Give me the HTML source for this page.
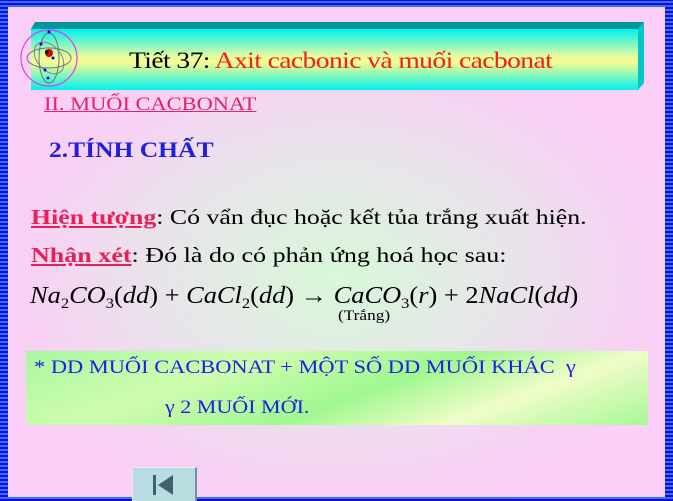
<!DOCTYPE html>
<html><head><meta charset="utf-8"><style>
*{margin:0;padding:0}
body{width:673px;height:501px;overflow:hidden;position:relative;font-family:"Liberation Serif",serif;
background:repeating-linear-gradient(0deg,#1010d0 0 2px,#3a6cff 2px 4px);}
#in{position:absolute;left:8px;top:7px;width:657px;height:490px;
background:radial-gradient(ellipse 60% 55% at 50% 55%,#d8f8d8 0%,#e8e4ea 45%,#f8d0f4 80%,#fccff8 100%);}
.abs{position:absolute;white-space:nowrap;transform-origin:0 0}
#title{position:absolute;left:31px;top:22px;width:613px;height:68px}
#eq{font-style:italic;font-size:24px;color:#000}
#eq sub{font-size:15px;vertical-align:-5px;font-style:normal}
</style></head><body>
<div id="in"></div>
<div id="title">
<svg width="613" height="68" style="position:absolute;left:0;top:0">
<defs><linearGradient id="g" x1="0" y1="0" x2="0" y2="1">
<stop offset="0" stop-color="#00f0f0"/><stop offset=".45" stop-color="#e8fca0"/><stop offset=".55" stop-color="#f8fc90"/><stop offset="1" stop-color="#00f0f0"/></linearGradient></defs>
<polygon points="4,0 613,0 607,7 0,7" fill="#009898"/>
<rect x="0" y="7" width="607" height="61" fill="url(#g)"/>
<polygon points="607,7 613,0 613,61 607,68" fill="#00c8c8"/>
</svg>
</div>
<svg class="abs" style="left:19px;top:28px" width="60" height="60">
<ellipse cx="30" cy="30" rx="28" ry="28" fill="none" stroke="#e040e0" stroke-width="1.2"/>
<ellipse cx="30" cy="30" rx="22" ry="10" fill="none" stroke="#707070" stroke-width="1"/>
<ellipse cx="30" cy="30" rx="10" ry="25" fill="none" stroke="#707070" stroke-width="1"/>
<ellipse cx="30" cy="30" rx="18" ry="12" fill="none" stroke="#808080" stroke-width="1" transform="rotate(50 30 30)"/>
<circle cx="30" cy="25" r="4" fill="#e00000"/><circle cx="28" cy="24" r="2" fill="#300"/>
<circle cx="30" cy="4" r="1.5" fill="#00f"/><circle cx="34" cy="30" r="1.5" fill="#00f"/><circle cx="26" cy="42" r="1.5" fill="#00f"/><circle cx="29" cy="50" r="1.5" fill="#00f"/><circle cx="22" cy="16" r="1.5" fill="#00f"/>
</svg>
<div class="abs" style="left:129px;top:48px;font-size:23px;color:#000;letter-spacing:-0.5px;transform:scaleX(1.2)">Tiết 37: <span style="color:#f02020">Axit cacbonic và muối cacbonat</span></div>
<div class="abs" style="left:44px;top:94px;font-size:19px;color:#e8206a;text-decoration:underline;transform:scaleX(1.18)">II. MUỐI CACBONAT</div>
<div class="abs" style="left:49px;top:137px;font-size:22px;font-weight:bold;color:#2020d8;transform:scaleX(1.16)">2.TÍNH CHẤT</div>
<div class="abs" style="left:31px;top:205px;font-size:21px;color:#000;transform:scaleX(1.23)"><b style="color:#e8205a;text-decoration:underline">Hiện tượng</b>: Có vẩn đục hoặc kết tủa trắng xuất hiện.</div>
<div class="abs" style="left:31px;top:243px;font-size:21px;color:#000;transform:scaleX(1.24)"><b style="color:#e8205a;text-decoration:underline">Nhận xét</b>: Đó là do có phản ứng hoá học sau:</div>
<div class="abs" id="eq" style="left:30px;top:283px;transform:scaleX(1.1)">Na<sub>2</sub>CO<sub>3</sub><span style="font-style:normal">(</span>dd<span style="font-style:normal">) + </span>CaCl<sub>2</sub><span style="font-style:normal">(</span>dd<span style="font-style:normal">) → </span>CaCO<sub>3</sub><span style="font-style:normal">(</span>r<span style="font-style:normal">) + 2</span>NaCl<span style="font-style:normal">(</span>dd<span style="font-style:normal">)</span></div>
<div class="abs" style="left:338px;top:308px;font-size:15px;color:#000;transform:scaleX(1.15)">(Trắng)</div>
<div class="abs" style="left:26px;top:351px;width:622px;height:74px;background:linear-gradient(160deg,#a8f8a0 0%,#d0fcb0 30%,#a0f890 55%,#f0fcc8 75%,#a8f898 100%)"></div>
<div class="abs" style="left:34px;top:357px;font-size:19px;color:#2020e0;transform:scaleX(1.18)">* DD MUỐI CACBONAT + MỘT SỐ DD MUỐI KHÁC &nbsp;γ</div>
<div class="abs" style="left:165px;top:397px;font-size:19px;color:#2020e0;transform:scaleX(1.16)">γ 2 MUỐI MỚI.</div>
<div class="abs" style="left:132px;top:467px;width:65px;height:34px;background:#b8dce0;border-top:1px solid #e0f0f0;border-left:1px solid #e0f0f0;border-right:2px solid #7090a0;box-sizing:border-box">
<div style="position:absolute;left:20px;top:7px;width:3px;height:20px;background:#406070"></div>
<div style="position:absolute;left:25px;top:7px;width:0;height:0;border-top:10px solid transparent;border-bottom:10px solid transparent;border-right:15px solid #406070"></div>
</div>
</body></html>
